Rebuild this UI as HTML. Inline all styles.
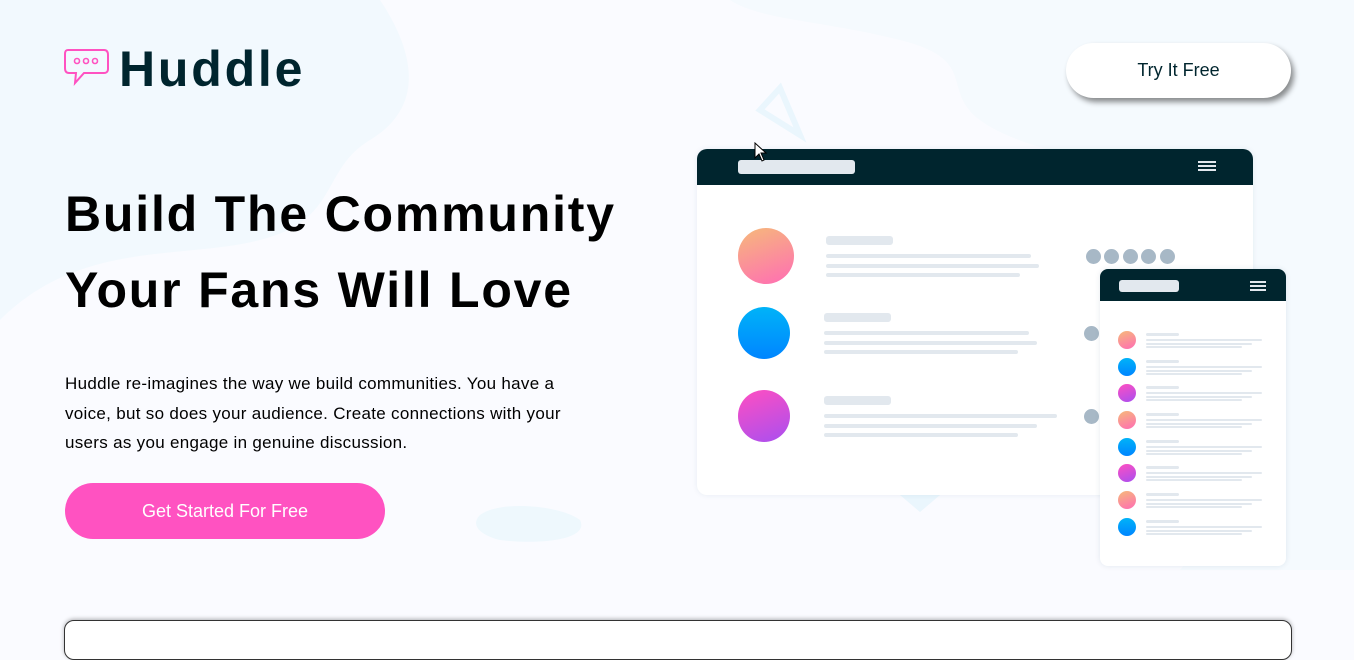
<!DOCTYPE html>
<html><head><style>
*{margin:0;padding:0;box-sizing:border-box}
body{width:1354px;height:632px;overflow:hidden;background:#fafbff;font-family:"Liberation Sans",sans-serif;position:relative}
.a{position:absolute}
.bar{position:absolute;background:#e2e8ee;border-radius:3px}
.c{position:absolute;border-radius:50%}
.o{background:linear-gradient(160deg,#f6b97a,#ff6db4)}
.b{background:linear-gradient(180deg,#00b3f8,#0085ff)}
.p{background:linear-gradient(160deg,#ff4fc1,#a94ff0)}
.d{position:absolute;width:15px;height:15px;border-radius:50%;background:#a7b8c6}
</style></head><body>
<svg class="a" style="left:0;top:0" width="1354" height="632">
<path d="M0 0 H380 C420 60 420 110 370 140 C320 170 340 220 260 240 C180 260 80 240 0 320Z" fill="#f2f9fe"/>
<path d="M730 0 H1354 V570 H1180 C1240 500 1260 420 1255 330 C1250 240 1240 200 1200 190 C1100 160 1020 150 980 120 C940 90 980 60 900 40 C820 20 760 20 730 0Z" fill="#f5fafe"/>
<path d="M780 88 L760 110 L800 135Z" fill="none" stroke="#eaf6fd" stroke-width="6"/>
<path d="M480 515 C500 500 560 505 580 520 C590 540 540 545 500 540 C480 535 470 525 480 515Z" fill="#eef8fd"/>
<path d="M900 495 L940 495 L920 512Z" fill="#eaf6fd"/>
</svg>
<svg class="a" style="left:64px;top:47px" width="46" height="40" viewBox="0 0 46 40"><path d="M4 3 H40 C43 3 44 5 44 8 V22 C44 25 42 26 40 26 H20 L11 36 L12 26 H5 C2 26 1 24 1 21 V7 C1 4 2 3 4 3Z" fill="none" stroke="#ff52c1" stroke-width="2"/><circle cx="13" cy="14" r="2.5" fill="none" stroke="#ff52c1" stroke-width="1.6"/><circle cx="22" cy="14" r="2.5" fill="none" stroke="#ff52c1" stroke-width="1.6"/><circle cx="31" cy="14" r="2.5" fill="none" stroke="#ff52c1" stroke-width="1.6"/></svg>
<div class="a" style="left:119px;top:40px;font-size:50px;font-weight:bold;color:#00252e;letter-spacing:2.8px">Huddle</div>
<div class="a" style="left:1066px;top:43px;width:225px;height:55px;border-radius:28px;background:#fff;box-shadow:3px 4px 6px rgba(0,0,0,.45);font-size:18px;color:#00252e;text-align:center;line-height:55px">Try It Free</div>
<div class="a" style="left:65px;top:176px;font-size:50px;font-weight:bold;color:#000;line-height:76px;letter-spacing:1.8px">Build The Community<br>Your Fans Will Love</div>
<div class="a" style="left:65px;top:369px;width:536px;font-size:17px;color:#000;line-height:29.5px;letter-spacing:0.3px">Huddle re-imagines the way we build communities. You have a voice, but so does your audience. Create connections with your users as you engage in genuine discussion.</div>
<div class="a" style="left:65px;top:483px;width:320px;height:56px;border-radius:28px;background:#ff52c1;color:#fff;font-size:18px;text-align:center;line-height:56px">Get Started For Free</div>

<div class="a" style="left:697px;top:149px;width:556px;height:346px;background:#fff;border-radius:10px;box-shadow:0 0 6px rgba(0,60,100,.08);overflow:hidden">
<div class="a" style="left:0;top:0;width:556px;height:36px;background:#00252e"></div>
<div class="a" style="left:41px;top:11px;width:117px;height:14px;background:#e2e8ee;border-radius:3px"></div>
<div class="a" style="left:501px;top:12px;width:18px;height:2px;background:#e2e8ee;box-shadow:0 4px #e2e8ee,0 8px #e2e8ee"></div>
</div>
<div class="c o" style="left:738px;top:228px;width:56px;height:56px"></div>
<div class="c b" style="left:738px;top:307px;width:52px;height:52px"></div>
<div class="c p" style="left:738px;top:390px;width:52px;height:52px"></div>
<div class="bar" style="left:826px;top:236px;width:67px;height:9px"></div>
<div class="bar" style="left:826px;top:254px;width:205px;height:4px"></div>
<div class="bar" style="left:826px;top:264px;width:213px;height:4px"></div>
<div class="bar" style="left:826px;top:273px;width:194px;height:4px"></div>
<div class="bar" style="left:824px;top:313px;width:67px;height:9px"></div>
<div class="bar" style="left:824px;top:331px;width:205px;height:4px"></div>
<div class="bar" style="left:824px;top:341px;width:213px;height:4px"></div>
<div class="bar" style="left:824px;top:350px;width:194px;height:4px"></div>
<div class="bar" style="left:824px;top:396px;width:67px;height:9px"></div>
<div class="bar" style="left:824px;top:414px;width:233px;height:4px"></div>
<div class="bar" style="left:824px;top:424px;width:213px;height:4px"></div>
<div class="bar" style="left:824px;top:433px;width:194px;height:4px"></div>
<div class="d" style="left:1086px;top:249px"></div><div class="d" style="left:1104px;top:249px"></div><div class="d" style="left:1123px;top:249px"></div><div class="d" style="left:1141px;top:249px"></div><div class="d" style="left:1160px;top:249px"></div>
<div class="d" style="left:1084px;top:326px"></div><div class="d" style="left:1084px;top:409px"></div>

<div class="a" style="left:1100px;top:269px;width:186px;height:297px;background:#fff;border-radius:8px;box-shadow:0 0 6px rgba(0,60,100,.1);overflow:hidden">
<div class="a" style="left:0;top:0;width:186px;height:32px;background:#00252e"></div>
<div class="a" style="left:19px;top:11px;width:60px;height:12px;background:#e2e8ee;border-radius:3px"></div>
<div class="a" style="left:150px;top:12px;width:16px;height:2px;background:#e2e8ee;box-shadow:0 4px #e2e8ee,0 8px #e2e8ee"></div>
</div>
<div id="ph"></div>
<script>
var cls=['o','b','p','o','b','p','o','b'],ys=[340,367,393,420,447,473,500,527],h='';
for(var i=0;i<8;i++){var y=ys[i];h+='<div class="c '+cls[i]+'" style="left:1118px;top:'+(y-9)+'px;width:18px;height:18px"></div>'+
'<div class="bar" style="left:1146px;top:'+(y-7)+'px;width:33px;height:3px"></div>'+
'<div class="bar" style="left:1146px;top:'+(y-1)+'px;width:116px;height:2px"></div>'+
'<div class="bar" style="left:1146px;top:'+(y+3)+'px;width:106px;height:2px"></div>'+
'<div class="bar" style="left:1146px;top:'+(y+6)+'px;width:96px;height:2px"></div>';}
document.getElementById('ph').innerHTML=h;
</script>
<svg class="a" style="left:754px;top:142px" width="14" height="20"><path d="M1 1 V16 L5 12 L8 19 L10 18 L7 11 L12 11Z" fill="#fff" stroke="#000" stroke-width="1"/></svg>
<div class="a" style="left:64px;top:620px;width:1228px;height:40px;background:#fff;border:1px solid #333;border-radius:10px;box-shadow:0 -1px 4px rgba(0,0,0,.3)"></div>
</body></html>
